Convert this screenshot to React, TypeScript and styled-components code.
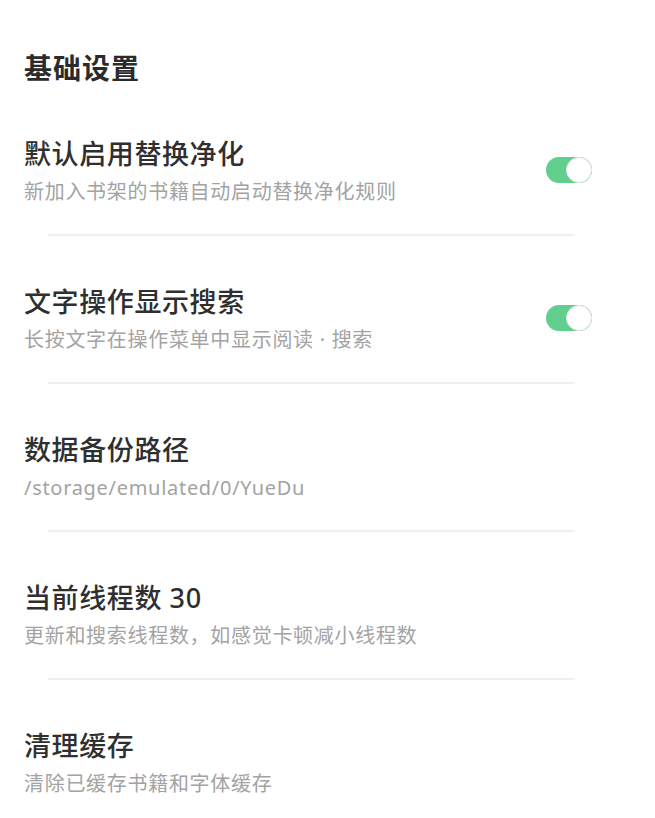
import * as React from 'react';
import styled, { createGlobalStyle } from 'styled-components';

const GlobalStyle = createGlobalStyle`
  html, body {
    margin: 0;
    padding: 0;
    background: #ffffff;
  }
  body {
    font-family: 'Noto Sans', 'Noto Sans CJK SC', sans-serif;
    -webkit-font-smoothing: antialiased;
  }
`;

const Page = styled.div`
  width: 655px;
  min-height: 818px;
  box-sizing: border-box;
  padding-top: 48px;
  background: #ffffff;
`;

const SectionTitle = styled.h1`
  margin: 0;
  padding-left: 24px;
  font-size: 28px;
  line-height: 40px;
  font-weight: 700;
  color: #2b2b2b;
  letter-spacing: 1px;
`;

const Item = styled.div`
  display: flex;
  align-items: center;
  justify-content: space-between;
  padding: 48px 63px 26px 24px;
`;

const Texts = styled.div`
  display: flex;
  flex-direction: column;
`;

const Title = styled.div`
  font-size: 27px;
  line-height: 36px;
  font-weight: 500;
  color: #2f2f2f;
  margin-bottom: 4px;
  letter-spacing: 0.6px;
`;

const Summary = styled.div`
  font-size: 20px;
  line-height: 32px;
  color: #a3a3a3;
  letter-spacing: 0.7px;
`;

const Divider = styled.div`
  height: 2px;
  margin: 0 80px 0 48px;
  background: #efefef;
`;

const Track = styled.div<{ $on: boolean }>`
  position: relative;
  width: 46px;
  height: 26px;
  margin-top: -4px;
  border-radius: 13px;
  background: ${(p) => (p.$on ? '#63cf8e' : '#dddddd')};
  flex-shrink: 0;
`;

const Knob = styled.span<{ $on: boolean }>`
  position: absolute;
  top: 0;
  ${(p) => (p.$on ? 'right: 0;' : 'left: 0;')}
  width: 26px;
  height: 26px;
  box-sizing: border-box;
  border-radius: 50%;
  background: #ffffff;
  border: 1px solid #e6e6e6;
`;

const Switch: React.FC<{ on: boolean }> = ({ on }) => (
  <Track $on={on}>
    <Knob $on={on} />
  </Track>
);

interface Pref {
  title: string;
  summary: string;
  toggle?: boolean;
}

const prefs: Pref[] = [
  { title: '默认启用替换净化', summary: '新加入书架的书籍自动启动替换净化规则', toggle: true },
  { title: '文字操作显示搜索', summary: '长按文字在操作菜单中显示阅读 · 搜索', toggle: true },
  { title: '数据备份路径', summary: '/storage/emulated/0/YueDu' },
  { title: '当前线程数 30', summary: '更新和搜索线程数，如感觉卡顿减小线程数' },
  { title: '清理缓存', summary: '清除已缓存书籍和字体缓存' },
];

export default function App() {
  return (
    <Page>
      <GlobalStyle />
      <SectionTitle>基础设置</SectionTitle>
      {prefs.map((p, i) => (
        <React.Fragment key={p.title}>
          <Item>
            <Texts>
              <Title>{p.title}</Title>
              <Summary>{p.summary}</Summary>
            </Texts>
            {p.toggle !== undefined && <Switch on={p.toggle} />}
          </Item>
          {i < prefs.length - 1 && <Divider />}
        </React.Fragment>
      ))}
    </Page>
  );
}
